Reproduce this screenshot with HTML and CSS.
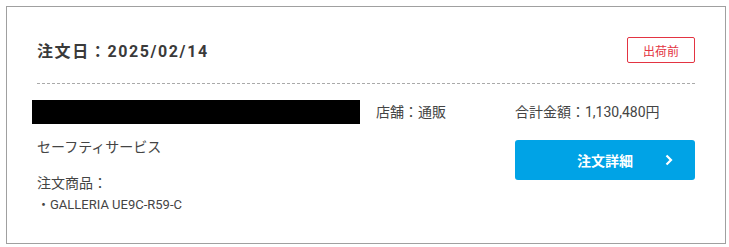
FILE: index.html
```html
<!DOCTYPE html>
<html lang="ja">
<head>
    <meta charset="UTF-8">
    <meta name="viewport" content="width=device-width, initial-scale=1.0">
    <title>注文履歴</title>
    <link rel="stylesheet" href="styles.css">
</head>
<body>
    <div class="order-card">
        <div class="order-header">
            <h2 class="order-date">注文日：2025/02/14</h2>
            <span class="order-status">出荷前</span>
        </div>

        <div class="order-body">
            <div class="order-main">
                <div class="redacted"></div>
                <div class="service-name">セーフティサービス</div>
                <div class="items-label">注文商品：</div>
                <div class="item-name">・GALLERIA UE9C-R59-C</div>
            </div>
            <div class="order-shop">店舗：通販</div>
            <div class="order-side">
                <div class="order-total">合計金額：1,130,480円</div>
                <a class="detail-button" href="#">
                    注文詳細
                    <svg class="chevron" width="8" height="12" viewBox="0 0 8 12">
                        <path d="M1.5 1.5 L6 6 L1.5 10.5" fill="none" stroke="#fff" stroke-width="2.2"/>
                    </svg>
                </a>
            </div>
        </div>
    </div>
</body>
</html>
```

FILE: styles.css
```css
body {
    margin: 0;
    padding: 6px 0 0 6px;
    background-color: #fff;
    font-family: Roboto, "Noto Sans CJK JP", sans-serif;
    color: #444;
}

.order-card {
    width: 658px;
    padding: 30px;
    border: 1px solid #a0a0a0;
    background-color: #fff;
}

.order-header {
    display: flex;
    justify-content: space-between;
    align-items: center;
    height: 26px;
    padding-bottom: 20px;
    border-bottom: 1px dashed #aaa;
}

.order-date {
    margin: 0;
    font-size: 16px;
    font-weight: bold;
    letter-spacing: 1.6px;
    color: #3a3a3a;
}

.order-status {
    display: flex;
    align-items: center;
    justify-content: center;
    width: 66px;
    height: 24px;
    border: 1px solid #e33442;
    border-radius: 2px;
    font-size: 12px;
    color: #e33442;
}

.order-body {
    display: grid;
    grid-template-columns: 339px 139px 180px;
    padding-top: 16px;
}

.order-main {
    display: flex;
    flex-direction: column;
}

/* blacked out customer name */
.redacted {
    width: 328px;
    height: 24px;
    margin-left: -5px;
    background-color: #000;
}

.service-name {
    margin-top: 13px;
    font-size: 14px;
    line-height: 20px;
}

.items-label {
    margin-top: 16px;
    font-size: 14px;
    line-height: 20px;
}

.item-name {
    margin-top: 4px;
    font-size: 13px;
    line-height: 16px;
}

.order-shop,
.order-total {
    font-size: 14px;
    line-height: 24px;
}

.detail-button {
    position: relative;
    display: flex;
    align-items: center;
    justify-content: center;
    height: 40px;
    margin-top: 16px;
    background-color: #00a3e6;
    border-radius: 3px;
    color: #fff;
    font-size: 14px;
    font-weight: bold;
    text-decoration: none;
}

.chevron {
    position: absolute;
    right: 22px;
    top: 14px;
}
```
